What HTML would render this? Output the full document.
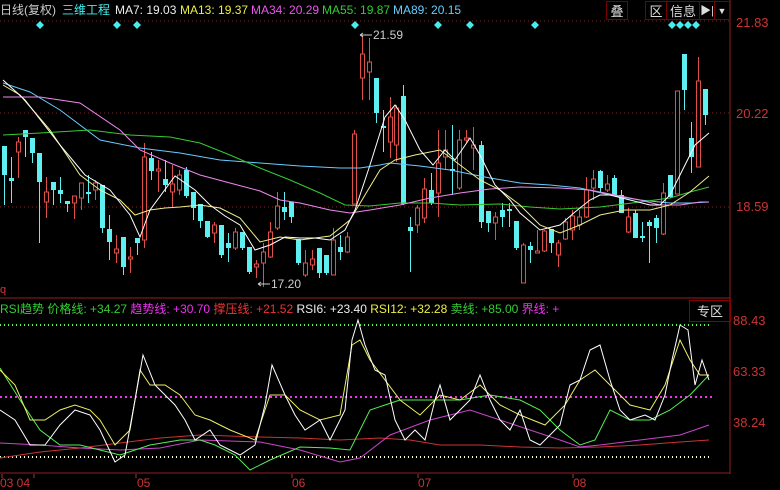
<!DOCTYPE html><html><head><meta charset="utf-8"><style>
body{margin:0;background:#000;width:780px;height:490px;overflow:hidden;font-family:"Liberation Sans","Noto Sans CJK SC",sans-serif;}
.t{position:absolute;font-size:12px;white-space:nowrap;line-height:14px}
.btn{position:absolute;top:1px;height:19px;border:1px solid #700;color:#ddd;font-size:13px;line-height:19px;text-align:center;box-sizing:border-box}
</style></head><body>
<svg id="s" width="780" height="490" style="position:absolute;left:0;top:0">
<line x1="730" y1="0" x2="730" y2="474" stroke="#902020"/>
<line x1="0" y1="298" x2="730" y2="298" stroke="#902020"/>
<line x1="0" y1="473" x2="730" y2="473" stroke="#902020"/>
<g stroke="#802020" stroke-dasharray="1 3">
<line x1="0" y1="21" x2="730" y2="21"/><line x1="0" y1="113" x2="730" y2="113"/><line x1="0" y1="207" x2="730" y2="207"/>
</g>
<line x1="0" y1="325" x2="712" y2="325" stroke="#5f5" stroke-width="2" stroke-dasharray="1 3"/>
<line x1="0" y1="397" x2="712" y2="397" stroke="#e3e" stroke-width="2" stroke-dasharray="2 3"/>
<line x1="0" y1="457" x2="712" y2="457" stroke="#ffc" stroke-width="2" stroke-dasharray="1 3"/>
<g id="c"></g><g id="l" fill="none" stroke-width="1"></g>
<g fill="#4ee">
<path d="M40 21l4 4-4 4-4-4z"/><path d="M117 21l4 4-4 4-4-4z"/><path d="M137 21l4 4-4 4-4-4z"/><path d="M355 21l4 4-4 4-4-4z"/><path d="M438 21l4 4-4 4-4-4z"/><path d="M470 21l4 4-4 4-4-4z"/><path d="M535 21l4 4-4 4-4-4z"/><path d="M672 21l4 4-4 4-4-4z"/><path d="M680 21l4 4-4 4-4-4z"/><path d="M688 21l4 4-4 4-4-4z"/><path d="M696 21l4 4-4 4-4-4z"/>
</g>
<g stroke="#ccc" fill="none"><path d="M360 35h12M360 35l3-2M360 35l3 2"/><path d="M258 284h12M258 284l3-2M258 284l3 2"/></g>
<g stroke="#a33"><line x1="2" y1="474" x2="2" y2="478"/><line x1="34" y1="474" x2="34" y2="478"/><line x1="136" y1="474" x2="136" y2="478"/><line x1="292" y1="474" x2="292" y2="478"/><line x1="418" y1="474" x2="418" y2="478"/><line x1="573" y1="474" x2="573" y2="478"/></g>
</svg>
<div class="t" style="left:0;top:3px;color:#ccc">日线(复权)</div>
<div class="t" style="left:62px;top:3px;color:#4ee">三维工程</div>
<div class="t" style="left:115px;top:3px;color:#eee">MA7: 19.03</div>
<div class="t" style="left:180px;top:3px;color:#ee4">MA13: 19.37</div>
<div class="t" style="left:251px;top:3px;color:#e5e">MA34: 20.29</div>
<div class="t" style="left:322px;top:3px;color:#3c3">MA55: 19.87</div>
<div class="t" style="left:393px;top:3px;color:#6cf">MA89: 20.15</div>
<div class="btn" style="left:606px;width:22px">叠</div>
<div class="btn" style="left:645px;width:22px">区</div>
<div class="btn" style="left:666px;width:34px">信息</div>
<div class="btn" style="left:699px;width:16px;font-size:11px">▶|</div>
<div class="btn" style="left:714px;width:16px;font-size:9px">▼</div>
<div class="t" style="left:373px;top:28px;color:#ccc">21.59</div>
<div class="t" style="left:271px;top:277px;color:#ccc">17.20</div>
<div class="t" style="left:736px;top:16px;color:#c33;font-size:13px">21.83</div>
<div class="t" style="left:736px;top:107px;color:#c33;font-size:13px">20.22</div>
<div class="t" style="left:736px;top:200px;color:#c33;font-size:13px">18.59</div>
<div class="t" style="left:0;top:283px;color:#d33;font-size:11px">q</div>
<div class="t" style="left:0;top:302px;font-size:12px"><span style="color:#3c3">RSI趋势 价格线: +34.27 </span><span style="color:#e3e">趋势线: +30.70 </span><span style="color:#e33">撑压线: +21.52 </span><span style="color:#eee">RSI6: +23.40 </span><span style="color:#ee4">RSI12: +32.28 </span><span style="color:#3c3">卖线: +85.00 </span><span style="color:#e3e">界线: +</span></div>
<div style="position:absolute;left:689px;top:300px;width:42px;height:22px;border:1px solid #800;color:#ddd;font-size:13px;line-height:22px;text-align:center;box-sizing:border-box;font-family:'Liberation Sans','Noto Sans CJK SC',sans-serif">专区</div>
<div class="t" style="left:733px;top:314px;color:#c33;font-size:13px">88.43</div>
<div class="t" style="left:733px;top:365px;color:#c33;font-size:13px">63.33</div>
<div class="t" style="left:733px;top:416px;color:#c33;font-size:13px">38.24</div>
<div class="t" style="left:0;top:476px;color:#c33;font-size:12px">03 04</div>
<div class="t" style="left:137px;top:476px;color:#c33;font-size:12px">05</div>
<div class="t" style="left:292px;top:476px;color:#c33;font-size:12px">06</div>
<div class="t" style="left:418px;top:476px;color:#c33;font-size:12px">07</div>
<div class="t" style="left:573px;top:476px;color:#c33;font-size:12px">08</div>
<script>
var C=[[2,146,175,146,205,0],[9,178,181,157,203,0],[16,142,152,137,178,1],[23,130,137,130,157,0],[30,138,153,138,163,0],[37,153,182,153,243,0],[44,192,202,177,218,1],[51,182,190,182,205,0],[58,190,194,177,203,0],[65,201,204,201,212,0],[72,196,203,196,219,1],[79,183,198,183,210,1],[86,192,194,175,203,0],[93,183,190,180,200,1],[100,185,228,185,233,0],[107,229,242,215,260,0],[114,249,253,235,263,1],[121,237,267,237,275,0],[128,257,259,247,273,1],[135,238,243,238,255,0],[142,157,240,143,248,1],[149,158,171,152,180,0],[156,169,171,160,192,1],[163,179,185,160,192,0],[170,184,192,165,207,1],[177,175,190,170,195,1],[184,170,196,167,198,0],[191,192,208,192,220,0],[198,204,221,204,228,0],[205,221,237,221,238,0],[212,225,233,222,243,1],[219,225,255,225,258,0],[226,243,248,233,262,0],[233,232,248,228,250,1],[240,232,248,232,250,0],[247,247,272,247,274,0],[254,264,267,260,278,1],[261,252,263,243,287,1],[268,232,257,222,258,1],[275,206,228,192,230,1],[282,207,212,192,220,0],[289,202,217,202,223,0],[296,239,263,239,265,0],[303,263,275,250,277,1],[310,259,265,250,270,1],[317,248,273,248,278,0],[324,255,273,255,275,0],[331,240,275,228,275,1],[338,247,252,235,260,0],[345,237,252,232,253,1],[352,134,204,130,204,1],[360,54,78,35,100,1],[367,62,72,38,100,1],[374,78,113,78,123,0],[381,126,128,110,152,0],[388,117,142,97,158,1],[394,108,145,105,162,1],[401,96,204,85,205,0],[408,227,231,217,272,0],[415,208,225,205,233,1],[422,189,218,178,223,1],[429,190,203,173,205,0],[436,163,193,130,217,1],[443,150,157,130,170,1],[450,169,171,125,195,0],[457,140,188,130,190,1],[464,138,140,130,143,1],[471,145,148,127,170,1],[479,145,222,141,228,0],[486,211,223,211,232,0],[493,217,223,212,240,1],[500,210,217,203,227,0],[507,209,211,203,227,0],[514,221,248,221,250,0],[521,245,283,243,283,1],[528,246,250,242,263,0],[535,251,253,230,253,1],[542,231,251,230,252,1],[549,229,243,229,253,0],[556,243,255,240,267,1],[563,222,239,218,240,1],[570,216,230,210,240,1],[577,217,225,210,230,1],[584,190,217,177,218,1],[591,179,188,170,200,1],[598,171,188,170,193,0],[605,184,190,175,192,1],[612,178,195,175,195,0],[619,195,213,190,213,0],[626,217,232,208,233,1],[633,213,238,210,238,0],[640,236,238,222,242,0],[647,222,226,220,263,0],[654,218,228,215,243,0],[661,193,234,183,235,1],[668,175,197,175,198,0],[675,91,194,91,194,1],[682,54,90,54,110,0],[689,138,157,122,173,0],[696,81,167,57,167,1],[703,89,115,89,125,0]];
var h='';C.forEach(function(c){var col=c[5]?'#e0504a':'#5ef0f0';h+='<line x1="'+(c[0]+2.5)+'" y1="'+c[3]+'" x2="'+(c[0]+2.5)+'" y2="'+c[4]+'" stroke="'+col+'"/>';var ht=Math.max(1,c[2]-c[1]);if(c[5])h+='<rect x="'+(c[0]+0.5)+'" y="'+c[1]+'" width="4" height="'+ht+'" fill="#000" stroke="'+col+'"/>';else h+='<rect x="'+c[0]+'" y="'+c[1]+'" width="5" height="'+ht+'" fill="'+col+'"/>';});
document.getElementById('c').innerHTML=h;
var L=[['#6cf',"3,83 30,92 60,110 100,140 140,148 180,153 220,160 260,163 300,166 340,168 360,168 380,165 390,163 420,166 450,170 490,178 520,183 550,185 580,188 610,195 640,200 670,203 690,203 709,202"],
['#3c3',"3,135 40,133 90,130 130,135 170,137 200,143 230,155 260,168 290,180 320,193 345,205 370,206 400,203 430,203 460,205 500,204 530,207 560,209 600,207 640,202 670,198 690,192 709,187"],
['#e8e',"3,97 40,97 80,103 120,130 140,150 170,163 200,175 230,183 260,191 280,200 300,203 330,210 350,213 370,210 400,205 430,198 460,193 490,189 520,187 560,188 590,190 620,196 640,200 660,205 680,205 700,202 709,202"],
['#ee8',"3,85 20,95 50,130 80,175 100,190 120,200 135,215 150,210 165,208 180,207 200,205 220,208 240,218 260,242 280,237 300,240 330,236 350,220 365,195 380,170 395,160 415,155 440,150 460,165 480,180 500,190 520,205 540,225 560,233 580,225 600,215 625,210 650,210 670,205 690,192 709,176"],
['#fff',"3,80 25,100 60,145 85,175 110,190 130,215 140,237 150,210 175,176 195,190 210,205 225,216 240,225 255,250 270,245 285,237 300,238 315,238 330,240 345,230 355,210 370,165 385,117 395,105 405,120 420,150 433,165 445,150 455,160 470,138 480,155 495,185 510,200 520,213 540,230 560,225 575,212 590,200 600,195 610,195 630,200 650,205 660,205 670,195 680,175 695,145 709,133"],
['#c33',"0,458 40,452 80,448 120,443 160,438 200,435 260,437 300,438 340,440 380,438 410,440 440,445 480,445 520,447 560,448 600,447 640,445 680,442 709,440"],
['#c4c',"0,443 40,445 80,448 120,450 160,448 200,440 260,442 300,450 340,462 360,458 390,435 430,420 470,410 500,420 530,430 560,440 580,447 600,445 640,440 680,435 709,425"],
['#5e5',"0,368 20,400 40,430 60,445 80,445 100,450 120,455 150,445 180,440 200,440 215,445 235,455 250,470 270,460 300,447 330,448 350,450 370,410 400,400 430,400 460,400 490,395 520,400 540,410 560,430 580,445 595,440 610,410 630,420 650,420 670,410 690,395 709,375"],
['#ee6',"0,370 15,385 30,420 45,420 60,410 75,405 90,410 100,420 115,445 130,430 140,370 150,385 165,385 180,395 195,415 210,420 230,430 255,440 270,395 285,395 300,410 320,420 340,415 352,345 360,340 370,360 385,380 400,400 420,415 440,395 460,400 480,385 500,405 520,415 545,425 565,405 580,380 595,370 610,385 630,405 650,410 665,385 680,340 690,360 700,375 709,375"],
['#fff',"0,410 15,420 30,445 45,445 60,425 75,410 90,415 100,430 115,462 125,455 135,400 143,355 155,385 165,395 175,405 185,420 195,440 210,430 220,445 240,455 255,445 265,405 272,365 285,395 295,415 305,430 320,420 330,440 345,410 352,340 358,320 365,345 375,370 385,375 395,420 405,440 415,430 425,440 435,400 440,385 450,420 460,410 470,400 480,375 490,400 500,420 510,430 520,410 530,440 540,445 560,425 570,385 580,380 590,350 600,345 610,380 620,410 630,420 645,415 655,420 665,395 672,360 680,325 688,330 695,385 702,360 709,380"]];
var g='';L.forEach(function(a){g+='<polyline points="'+a[1]+'" stroke="'+a[0]+'"/>';});
document.getElementById('l').innerHTML=g;
</script>
</body></html>
